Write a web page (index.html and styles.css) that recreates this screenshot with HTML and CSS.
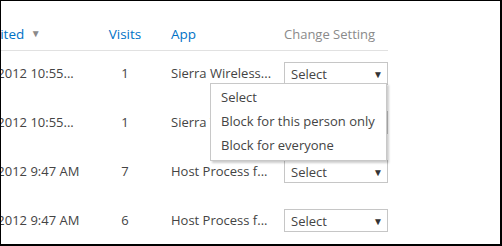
FILE: index.html
```html
<!DOCTYPE html>
<html lang="en">
<head>
  <meta charset="UTF-8">
  <title>App Access</title>
  <link rel="stylesheet" href="styles.css">
</head>
<body>
  <div class="frame">
    <div class="grid">
      <div class="head first">Last Visited <span class="sort">&#9660;</span></div>
      <div class="head visits">Visits</div>
      <div class="head app">App</div>
      <div class="head setting">Change Setting</div>

      <div class="cell first">11/28/2012 10:55...</div>
      <div class="cell visits">1</div>
      <div class="cell app">Sierra Wireless...</div>
      <div class="cell pick">
        <div class="select">Select <span class="arrow">&#9660;</span></div>
        <ul class="menu">
          <li>Select</li>
          <li>Block for this person only</li>
          <li>Block for everyone</li>
        </ul>
      </div>

      <div class="cell first">11/28/2012 10:55...</div>
      <div class="cell visits">1</div>
      <div class="cell app">Sierra Wireless...</div>
      <div class="cell pick"><div class="select">Select <span class="arrow">&#9660;</span></div></div>

      <div class="cell first">11/28/2012 9:47 AM</div>
      <div class="cell visits">7</div>
      <div class="cell app">Host Process f...</div>
      <div class="cell pick"><div class="select">Select <span class="arrow">&#9660;</span></div></div>

      <div class="cell first">11/28/2012 9:47 AM</div>
      <div class="cell visits">6</div>
      <div class="cell app">Host Process f...</div>
      <div class="cell pick"><div class="select">Select <span class="arrow">&#9660;</span></div></div>
    </div>
  </div>
</body>
</html>
```

FILE: styles.css
```css
body {
  margin: 0;
  font-family: "Open Sans", "Noto Sans", sans-serif;
  font-size: 13px;
  color: #444;
}

.frame {
  box-sizing: border-box;
  width: 502px;
  height: 246px;
  overflow: hidden;
  background: #fff;
  border-style: solid;
  border-color: #000;
  border-width: 1px 2px 2px 1px;
}

.grid {
  display: grid;
  grid-template-columns: 138px 60px 129px 104px;
  grid-template-rows: 50px repeat(4, 49px);
  margin-left: -44px;
  width: 431px;
}

.head {
  color: #0072c6;
  font-size: 13.5px;
  padding-top: 24px;
  border-bottom: 1px solid #e1e1e1;
  white-space: nowrap;
}

.head.first {
  text-indent: -4px;
}

.cell.first {
  padding-left: 1px;
}

.head.setting {
  color: #8a8a8a;
  font-size: 13px;
}

.sort {
  color: #8a8a8a;
  font-size: 10px;
  margin-left: 3px;
  vertical-align: 2px;
}

.visits {
  text-align: center;
}

.app {
  padding-left: 16px;
}

.cell {
  padding-top: 13px;
  white-space: nowrap;
}

.pick {
  padding-top: 11px;
  position: relative;
}

.select {
  box-sizing: border-box;
  height: 23px;
  border: 1px solid #c6c6c6;
  padding: 2px 0 0 6px;
  display: flex;
  justify-content: space-between;
}

.arrow {
  font-size: 10px;
  color: #333;
  padding: 2px 4px 0 0;
}

.menu {
  position: absolute;
  left: -74px;
  top: 32px;
  width: 177px;
  margin: 0;
  padding: 1px 0 3px;
  list-style: none;
  background: #fff;
  border: 1px solid #c8c8c8;
  box-shadow: 2px 2px 2px rgba(0, 0, 0, 0.2);
  box-sizing: border-box;
  z-index: 2;
}

.menu li {
  padding: 3px 0 3px 10px;
  height: 18px;
  line-height: 18px;
}
```
